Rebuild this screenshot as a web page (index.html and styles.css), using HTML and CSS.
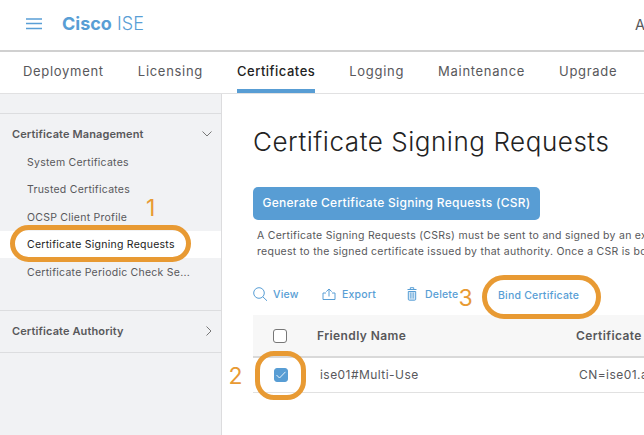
FILE: index.html
```html
<!DOCTYPE html>
<html lang="en">
<head>
<meta charset="utf-8">
<title>Cisco ISE</title>
<link rel="stylesheet" href="styles.css">
</head>
<body>
<header class="topbar">
  <svg class="menu" width="16" height="12" viewBox="0 0 16 12"><path d="M0 1h16M0 5.5h16M0 10.5h16"/></svg>
  <div class="brand"><b>Cisco</b> <span>ISE</span></div>
  <div class="crumb">A</div>
</header>
<nav class="tabs">
  <a>Deployment</a><a>Licensing</a><a class="active">Certificates</a><a>Logging</a><a>Maintenance</a><a>Upgrade</a>
</nav>
<div class="body">
  <aside class="side">
    <section class="group">
      <h2>Certificate Management<svg width="10" height="6" viewBox="0 0 10 6"><path d="M.5.5 5 5 9.500.5"/></svg></h2>
      <ul>
        <li>System Certificates</li>
        <li class="trusted">Trusted Certificates</li>
        <li>OCSP Client Profile</li>
        <li class="active">Certificate Signing Requests</li>
        <li>Certificate Periodic Check Se...</li>
      </ul>
    </section>
    <section class="group closed">
      <h2>Certificate Authority<svg width="6" height="10" viewBox="0 0 6 10"><path d="M.5.5 5 5 .5 9.500"/></svg></h2>
    </section>
  </aside>
  <main class="main">
    <h1>Certificate Signing Requests</h1>
    <button class="primary">Generate Certificate Signing Requests (CSR)</button>
    <p class="note">A Certificate Signing Requests (CSRs) must be sent to and signed by an external<br>request to the signed certificate issued by that authority. Once a CSR is bound</p>
    <div class="tools">
      <a class="view"><svg width="15" height="15" viewBox="0 0 15 15"><circle cx="6" cy="6" r="5.300"/><path d="m9.800 9.800 4.200 4"/></svg>View</a>
      <a class="export"><svg width="14" height="13" viewBox="0 0 14 13"><path d="M4 5H1v6.500h12V5h-3M7 8.500V1.200M4.300 3.600 7 1l2.700 2.600"/></svg>Export</a>
      <a class="delete"><svg width="10" height="14" viewBox="0 0 10 14"><path class="can" d="M1.300 4.500v7.700q0 1 1 1h5.400q1 0 1-1V4.500z"/><path d="M.5 2.500h9M3.300 2.300V.7h3.400v1.600"/><path class="ribs" d="M3.500 5.500v6M5 5.500v6M6.500 5.500v6"/></svg>Delete</a>
      <a class="bind">Bind Certificate</a>
    </div>
    <div class="row head"><i class="box"></i><span class="name">Friendly Name</span><span class="subject">Certificate Subject</span></div>
    <div class="row data"><i class="box checked"><svg width="10" height="8" viewBox="0 0 10 8"><path d="m.5 4 3 3L9.500.8"/></svg></i><span class="name">ise01#Multi-Use</span><span class="subject">CN=ise01.abc</span></div>
  </main>
</div>
<div class="ring ring1"></div><div class="ring ring2"></div><div class="ring ring3"></div>
<div class="num n1">1</div><div class="num n2">2</div><div class="num n3">3</div>
</body>
</html>
```
FILE: styles.css
```css
* { box-sizing: border-box; }
body { margin: 0; width: 644px; height: 435px; overflow: hidden; position: relative; background: #fff; color: #58585b; font-family: Inter, sans-serif; white-space: nowrap; }
svg { fill: none; stroke: currentColor; flex: none; }
.topbar { display: flex; align-items: center; height: 52px; padding: 0 0 2px 26px; border-bottom: 2px solid #d0d0d0; overflow: hidden; }
.menu { color: #5a9fd6; stroke-width: 1.5; }
.brand { margin-left: 20px; width: 573px; flex: none; font-size: 18px; color: #589ed5; line-height: 24px; }
.brand span { font-weight: 300; letter-spacing: .1px; }
.crumb { font-size: 14.500px; }
.tabs { display: flex; gap: 34px; height: 42px; padding-left: 23px; border-bottom: 1px solid #e1e1e2; font-size: 13px; letter-spacing: .7px; line-height: 39px; }
.tabs .active { color: #222; font-weight: 500; letter-spacing: .5px; border-bottom: 4px solid #589dd4; }
.body { display: flex; height: 341px; }
.side { width: 222px; flex: none; padding-top: 19px; background: #f1f2f4; border-right: 1px solid #dcdcde; }
.group { height: 197px; border-top: 1px solid #dcdddf; }
.group h2 { display: flex; align-items: center; justify-content: space-between; margin: 0; height: 34px; padding: 6px 9px 0 12px; font-size: 11px; line-height: 14px; font-weight: 600; letter-spacing: .12px; }
.group h2 svg { color: #777; stroke-width: 1; }
.group ul { list-style: none; margin: 0; padding: 0; font-size: 10.500px; letter-spacing: .25px; }
.group li { height: 27.500px; line-height: 29.500px; padding-left: 27px; }
.group .trusted { line-height: 28.500px; }
.group .active { background: #fff; color: #222; line-height: 28.500px; }
.closed { height: 43px; border-bottom: 1px solid #dcdddf; }
.closed h2 { height: 40px; padding-top: 0; }
.main { flex: 1; min-width: 0; overflow: hidden; padding: 28px 0 0 31px; }
h1 { margin: 0; color: #222; font-weight: 300; font-size: 26px; line-height: 40px; letter-spacing: .55px; }
.primary { display: block; width: 287px; height: 33px; margin: 25px 0 0; padding: 0 0 2px; border: 0; border-radius: 5px; background: #589dd4; color: #fff; font: 500 12px Inter, sans-serif; letter-spacing: .3px; }
.note { margin: 8px 0 0 4px; font-size: 10.500px; line-height: 15.500px; letter-spacing: .27px; }
.tools { display: flex; height: 56px; padding-top: 25px; font-size: 10.500px; font-weight: 500; letter-spacing: .2px; color: #589ed5; }
.tools a { display: flex; align-items: center; height: 20px; flex: none; }
.tools .bind { height: 22px; }
.view { width: 69px; gap: 5px; }
.export { width: 85px; gap: 6px; }
.delete { width: 91px; gap: 8px; }
.can { fill: #d5e7f5; }
.ribs { stroke-width: .6; }
.row { display: flex; align-items: center; }
.row span, .row i { flex: none; }
.head { height: 43px; background: #f7f7f7; border-bottom: 2px solid #d9d9d9; padding-left: 20px; font-size: 12px; font-weight: 600; letter-spacing: .4px; }
.data { height: 35px; border-bottom: 1px solid #e1e1e1; padding-left: 21px; font-size: 12px; letter-spacing: .45px; }
.box { display: grid; place-items: center; width: 14px; height: 14px; border: 1px solid #777; border-radius: 3px; background: #fff; }
.checked { color: #e8f3fb; background: #589dd4; border-color: #589dd4; }
.name { margin-left: 30px; width: 259px; }
.data span { padding-bottom: 1px; }
.data .name { margin-left: 32px; }
.ring { position: absolute; border: 5px solid #e89a33; }
.ring1 { left: 10px; top: 225px; width: 181px; height: 37px; border-radius: 19px; }
.ring2 { left: 255px; top: 351px; width: 51px; height: 49px; border-radius: 19px; }
.ring3 { left: 482px; top: 275px; width: 119px; height: 44px; border-radius: 22px; }
.num { position: absolute; color: #e89a33; font-size: 23px; line-height: 24px; font-weight: 400; }
.n1 { left: 146px; top: 196px; }
.n2 { left: 228.500px; top: 364px; }
.n3 { left: 458.500px; top: 286px; }
```
